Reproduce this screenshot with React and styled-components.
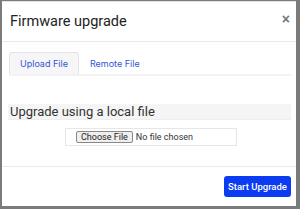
import React from "react";
import styled, { createGlobalStyle } from "styled-components";

const Global = createGlobalStyle`
  html, body {
    margin: 0;
    padding: 0;
    height: 100%;
    background: #7b7b7b;
  }
  #root {
    height: 100%;
  }
  * {
    box-sizing: border-box;
  }
`;

const Modal = styled.div`
  margin: 1px 4px 0 2px;
  height: 205px;
  background: #fff;
  border-top: 1px solid #e3e3e3;
  display: flex;
  flex-direction: column;
  font-family: Roboto, "Liberation Sans", sans-serif;
  color: #222;
`;

const Header = styled.div`
  height: 40px;
  display: flex;
  align-items: center;
  justify-content: space-between;
  padding: 0 6px 0 8px;
  border-bottom: 1px solid #e9e9e9;
`;

const Title = styled.h4`
  margin: 0;
  font-size: 14.5px;
  font-weight: 400;
  color: #222;
`;

const Close = styled.button`
  border: none;
  background: none;
  padding: 0;
  font-size: 14px;
  line-height: 1;
  font-weight: 700;
  color: #777;
  cursor: pointer;
  margin-top: -6px;
`;

const Body = styled.div`
  flex: 1;
  padding: 10px 5px 0 6px;
`;

const TabList = styled.div`
  display: flex;
  margin: 0 0 0 1px;
  border-bottom: 2px solid #f2f2f2;
`;

const Tab = styled.button`
  height: 22px;
  padding: 0 10px;
  border: 1px solid ${(p) => (p.$active ? "#e4e4e4" : "transparent")};
  border-bottom: none;
  border-radius: 3px 3px 0 0;
  background: ${(p) => (p.$active ? "#f6f6f8" : "#fff")};
  color: #3355d6;
  font-family: Inter, Roboto, sans-serif;
  font-size: 9px;
  cursor: pointer;
`;

const Section = styled.h5`
  margin: 28px 0 0 0;
  padding: 0 0 0 2px;
  height: 16px;
  line-height: 16px;
  background: #f5f5f5;
  font-size: 13px;
  font-weight: 400;
  color: #333;
  border-bottom: 1px solid #eee;
`;

const FileBox = styled.div`
  margin: 8px 0 0 57px;
  width: 172px;
  height: 18px;
  display: flex;
  align-items: center;
  padding-left: 10px;
  border: 1px solid #e6e6e6;
`;

const FileInput = styled.input`
  font-family: Roboto, "Liberation Sans", sans-serif;
  font-size: 9px;
  color: #333;
  width: 150px;

  &::file-selector-button {
    font-family: Roboto, "Liberation Sans", sans-serif;
    font-size: 9px;
    padding: 0 4px;
    height: 12px;
    margin-right: 3px;
    border: 1px solid #888;
    border-radius: 2px;
    background: #efefef;
    color: #222;
  }
`;

const Footer = styled.div`
  height: 40px;
  border-top: 1px solid #eaeaea;
  display: flex;
  align-items: center;
  justify-content: flex-end;
  padding: 0 5px 0 0;
`;

const Primary = styled.button`
  height: 21px;
  width: 67px;
  border: none;
  border-radius: 3px;
  background: #0b3cf2;
  color: #fff;
  font-family: Roboto, "Liberation Sans", sans-serif;
  font-size: 9.5px;
  font-weight: 500;
  white-space: nowrap;
  padding: 0;
  cursor: pointer;
`;

export default function App() {
  return (
    <>
      <Global />
      <Modal>
        <Header>
          <Title>Firmware upgrade</Title>
          <Close>×</Close>
        </Header>
        <Body>
          <TabList>
            <Tab $active>Upload File</Tab>
            <Tab>Remote File</Tab>
          </TabList>
          <Section>Upgrade using a local file</Section>
          <FileBox>
            <FileInput type="file" />
          </FileBox>
        </Body>
        <Footer>
          <Primary>Start Upgrade</Primary>
        </Footer>
      </Modal>
    </>
  );
}
